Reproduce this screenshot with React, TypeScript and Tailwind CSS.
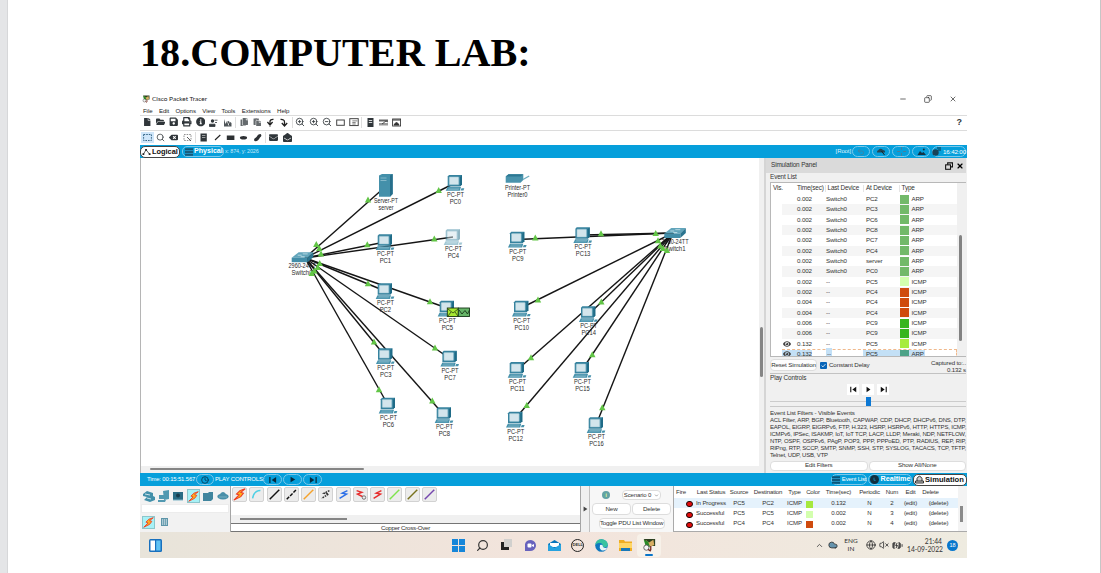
import type { ReactNode } from "react";
import { FaFile, FaFolderOpen, FaSave, FaPrint, FaInfoCircle, FaPaste, FaCopy, FaBackspace, FaEnvelope, FaEnvelopeOpen, FaEye } from "react-icons/fa";
import { ZoomIn, ZoomOut, Search, Undo2, Clock, Globe, VolumeX, Cloud, ChevronUp, ChevronDown, BatteryCharging, Minus, X, Copy } from "lucide-react";

const PCS: [string, number, number][] = [
  ["PC0", 455, 175], ["PC1", 385, 234.3], ["PC4", 453, 229.3], ["PC2", 385, 283.3], ["PC9", 517.3, 231.7],
  ["PC5", 447, 300.7], ["PC10", 521.3, 300.7], ["PC14", 588.3, 306.3], ["PC3", 385.3, 348.3], ["PC7", 449.7, 350.7],
  ["PC11", 517, 362], ["PC15", 582, 362], ["PC6", 388, 397.7], ["PC8", 444, 407.3], ["PC12", 515.3, 411.7],
  ["PC16", 596, 417.3], ["PC13", 582.7, 227.3],
];
const LEFT_ENDS = [[385, 187], [455, 183], [385, 242], [453, 237], [385, 291], [447, 308], [385, 356], [449, 358], [388, 405], [444, 415]];
const RIGHT_ENDS = [[517, 239.5], [583, 235], [521, 308], [588, 315], [517, 370], [582, 370], [515, 419], [596, 425]];
const LINKS = [
  [316.3, 244.3], [319.3, 248.5], [321, 254], [319.7, 263.3], [317.7, 267.3], [314.3, 271], [311.7, 273.3],
  [368, 200], [438.7, 190.3], [367.3, 244.7], [434.3, 239], [368, 283.7], [430, 301.7], [374, 342], [435, 348],
  [379, 389.7], [432.3, 401], [538, 300], [601.3, 302], [531, 357.7], [592.3, 354.7], [526.7, 405.3], [602.3, 407.7],
  [535.3, 238], [601, 233.7], [655.7, 233.3], [658, 240.7], [660.3, 246], [663, 248.3], [667, 250.3],
];

function Label({ x, y, w, children }: { x: number; y: number; w: number; children: string }) {
  return <text x={x} y={y + 2.5} textAnchor="middle" textLength={w} lengthAdjust="spacingAndGlyphs" fontSize="6.8" fill="#2a2a2a">{children}</text>;
}

function Pc({ x, y, faded }: { x: number; y: number; faded: boolean }) {
  return (
    <g transform={`translate(${x} ${y})`} opacity={faded ? 0.5 : 1}>
      <path d="M-6 0 H7 V9.5 L5 11.5 H-7.3 V1.5Z" fill="#36829e" />
      <path d="M5 2 L7 0 V9.5 L5 11.5Z" fill="#1f6b87" />
      <rect x="-5.8" y="1.9" width="9.6" height="7.8" rx=".6" fill="#d3e5ec" stroke="#8cbccd" strokeWidth=".5" />
      <path d="M-7.5 12 H6 L4.8 15.7 H-9.3Z" fill="#4691ab" />
      <path d="M-6.5 13.2H4.3M-7.2 14.5H3.8" stroke="#9cc7d5" strokeWidth=".5" />
      <path d="M6.5 13.3h2.8l-.8 2.2H5.5z" fill="#4691ab" />
    </g>
  );
}

function Switch({ x, y }: { x: number; y: number }) {
  return (
    <g transform={`translate(${x} ${y})`}>
      <path d="M0 6 L7 .5 H21.5 L16 6Z" fill="#62a5bb" />
      <path d="M0 6H16V10.5H0Z" fill="#428da8" />
      <path d="M16 6 L21.5.5V5.5L16 10.5Z" fill="#2b7590" />
      <path d="M6 3.5h4M11 2.2h5M9 5h4" stroke="#d8edf3" strokeWidth=".7" />
    </g>
  );
}

function Topology() {
  return (
    <svg viewBox="141 158 618 308" className="block h-[308px] w-[618px] font-['Liberation_Sans',sans-serif]">
      <Label x={302} y={265.7} w={27}>2960-24TT</Label>
      <Label x={302} y={272.5} w={21}>Switch0</Label>
      <Label x={675} y={241.7} w={27}>2960-24TT</Label>
      <Label x={675} y={248.5} w={21}>Switch1</Label>
      <g stroke="#151515" strokeWidth="1.4">
        {LEFT_ENDS.map(([x, y]) => <line key={`${x}-${y}`} x1="305" y1="258" x2={x} y2={y} />)}
        {RIGHT_ENDS.map(([x, y]) => <line key={`${x}-${y}`} x1="673" y1="233" x2={x} y2={y} />)}
      </g>
      <Switch x={291.7} y={251.7} />
      <Switch x={664.3} y={227.5} />
      <path d="M379 175.5L382 174H392.7V194L390 196.7H379Z" fill="#4490aa" />
      <path d="M390 175.5L392.7 174V194L390 196.7Z" fill="#276f8b" />
      <path d="M380.5 178h6M380.5 180.5h6" stroke="#a2cbd8" strokeWidth=".7" />
      <Label x={386} y={200.7} w={24}>Server-PT</Label>
      <Label x={386} y={207.3} w={15}>server</Label>
      <path d="M505.7 176.5L508.5 174.3H523.3V180L520.5 182.7H505.7Z" fill="#4993ac" />
      <path d="M505.7 176.5L508.5 174.3H523.3L520.5 176.5Z" fill="#2d7893" />
      <path d="M523 179.5L529.2 176" stroke="#70adbf" strokeWidth="1.4" />
      <Label x={517.5} y={187.6} w={25}>Printer-PT</Label>
      <Label x={517.5} y={194.4} w={20}>Printer0</Label>
      {PCS.map(([n, x, y]) => (
        <g key={n}>
          <Pc x={x} y={y} faded={n === "PC4"} />
          <Label x={x + 0.4} y={y + 19.5} w={17}>PC-PT</Label>
          <Label x={x + 0.4} y={y + 26.5} w={n.length > 3 ? 14.5 : 11.5}>{n}</Label>
        </g>
      ))}
      {LINKS.map(([x, y]) => <path key={`${x}-${y}`} d={`M${x} ${y - 3.4}L${x + 3.2} ${y + 2.6}H${x - 3.2}Z`} fill="#62c546" />)}
      <rect x="447.3" y="308" width="11" height="8.5" fill="#a6e832" stroke="#1b3410" strokeWidth=".9" />
      <path d="M448 309l5 4 5-4M448 316l3-4M458 316l-3-4" fill="none" stroke="#28400f" strokeWidth=".8" />
      <rect x="458.3" y="308" width="11.2" height="8.5" fill="#66b568" stroke="#173719" strokeWidth=".9" />
      <path d="M459 310l3 4 3-3.500 2.500 3.500 2-4" fill="none" stroke="#173719" strokeWidth=".9" />
    </svg>
  );
}

function Cell({ children, active }: { children: ReactNode; active?: boolean }) {
  return <div className={active ? "flex h-[11px] w-[13.3px] shrink-0 items-center justify-center bg-[#cfe6fa]" : "flex h-[11px] w-[13.3px] shrink-0 items-center justify-center"}>{children}</div>;
}
function Sep() {
  return <div className="flex h-[11px] w-[3.4px] shrink-0 justify-center"><div className="w-px bg-[#dedede]" /></div>;
}
function Draw({ children, w = 9, h = 9, vb = "0 0 9 9" }: { children: ReactNode; w?: number; h?: number; vb?: string }) {
  return <svg width={w} height={h} viewBox={vb} fill="none" className="block shrink-0">{children}</svg>;
}

function Toolbars() {
  return (
    <>
      <div className="flex h-[15px] shrink-0 items-center border-t border-[#dcdcdc] pb-[2px] pl-[0.7px] text-[#30363a]">
        <Cell><FaFile size={8.5} /></Cell><Cell><FaFolderOpen size={9.5} /></Cell><Cell><FaSave size={9.5} /></Cell><Cell><FaPrint size={9.5} /></Cell><Cell><FaInfoCircle size={9.5} /></Cell>
        <Cell><Draw><circle cx="3.5" cy="3" r="1.7" fill="#30363a" /><path d="M.5 8.5V6.2h5.5v2.3zM5.5 2.2h3M6 4.5h2" fill="#30363a" stroke="#30363a" strokeWidth=".8" /></Draw></Cell>
        <Cell><Draw><path d="M1 1v7.5h7.5V5L6.5 3.5v4h-1L4 3 2.5 6z" fill="#50565a" /><path d="M5 3l2 4.5" stroke="#30363a" /></Draw></Cell>
        <Sep />
        <Cell><FaCopy size={8.5} className="text-[#656a6d]" /></Cell><Cell><FaPaste size={8.5} className="text-[#656a6d]" /></Cell>
        <Cell><Draw><path d="M4 8.500V3.5Q4 1.2 7.500 1.400M1.400 4l2.6 3L6.6 4" stroke="#222" strokeWidth="1.3" /></Draw></Cell>
        <Cell><Draw><path d="M1.500 1.400Q5.5 1.2 5.5 4v4M2.800 5L5.5 8l2.7-3" stroke="#222" strokeWidth="1.3" /></Draw></Cell>
        <Sep />
        <Cell><ZoomIn size={10} /></Cell><Cell><ZoomIn size={10} /></Cell><Cell><ZoomOut size={10} /></Cell>
        <Cell><Draw><rect x=".7" y="2" width="7.6" height="5.3" stroke="#444" /></Draw></Cell>
        <Cell><Draw w={10} h={10}><rect x=".7" y="1.5" width="7.6" height="6.2" stroke="#444" strokeWidth=".9" /><path d="M3 3.5h4.5M3 5h3M3 6.3h3" stroke="#444" strokeWidth=".6" /></Draw></Cell>
        <Sep />
        <Cell><Draw><rect x="1.5" y="0" width="6" height="9" fill="#30363a" /><path d="M2.8 2.5h3.4M2.8 4.5h3.4" stroke="#fff" strokeWidth=".8" /></Draw></Cell>
        <Cell><Draw><path d="M0 1.500h9v2H0z" fill="#666" /><path d="M0 5h9v2.5H0z" fill="#999" /><path d="M3 6l4-3 2 1" stroke="#333" strokeWidth=".8" /></Draw></Cell>
        <Cell><Draw><rect x=".6" y="1" width="8" height="7" stroke="#333" strokeWidth=".9" /><path d="M1 2h7M2 7q2.5-5 5 0z" stroke="#333" fill="#333" /></Draw></Cell>
        <span className="mr-[5px] ml-auto text-[9px] leading-none font-bold">?</span>
      </div>
      <div className="flex h-[15px] shrink-0 items-center border-t border-[#dcdcdc] pb-[2px] pl-[0.7px] text-[#30363a]">
        <Cell active><Draw><rect x=".6" y="1.5" width="7.8" height="6" stroke="#386889" strokeDasharray="1.6 1" /></Draw></Cell>
        <Cell><Search size={9} /></Cell><Cell><FaBackspace size={9} /></Cell>
        <Cell><Draw><rect x="1" y="1.5" width="7" height="6" stroke="#777" strokeWidth=".8" strokeDasharray="1.6 1" /><path d="M4 4l4 4" stroke="#555" /></Draw></Cell>
        <Sep />
        <Cell><Draw><rect x="1.5" y=".5" width="6.3" height="8" fill="#30363a" /><path d="M3 2.5h3.4M3 4.5h3.4" stroke="#ccc" strokeWidth=".7" /></Draw></Cell>
        <Cell><Draw><path d="M2 7L7.3 2" stroke="#222" strokeWidth="1.1" /></Draw></Cell>
        <Cell><Draw><rect x=".8" y="2.5" width="7.6" height="4.5" fill="#2d3033" /></Draw></Cell>
        <Cell><Draw><ellipse cx="4.5" cy="4.7" rx="3.6" ry="1.8" fill="#2d3033" /></Draw></Cell>
        <Cell><Draw><path d="M1.5 8Q0 6 3.5 4 5 .7 7.5 1 9.5 2.5 7 4.5 5 8.8 1.5 8Z" fill="#2d3033" /></Draw></Cell>
        <Sep />
        <Cell><FaEnvelope size={9} /></Cell><Cell><FaEnvelopeOpen size={9} /></Cell>
      </div>
    </>
  );
}

function Pill({ children, className = "w-[18px]" }: { children: ReactNode; className?: string }) {
  return <div className={"flex h-[11px] shrink-0 items-center justify-center rounded-full border border-[#7cc8ea] " + className}>{children}</div>;
}
const Bars = ({ c }: { c: string }) => <Draw w={8} h={8}><path d="M0 1.3h9M0 4.5h9M0 7.7h9" stroke={c} strokeWidth="2.2" /><path d="M0 3h9M0 6h9" stroke="#3c8fb8" strokeWidth=".7" /></Draw>;

function TopBar() {
  return (
    <div className="flex h-[13px] shrink-0 items-center bg-[#069fdb] text-white">
      <div className="flex h-[12px] w-[40px] shrink-0 items-center rounded-[5px] border border-[#444] bg-white pl-px text-[7.4px] font-bold text-[#111]">
        <Draw w={9} h={8}><path d="M1 7L4 2l4 5" stroke="#222" strokeWidth=".8" /><path d="M0 6h2v2H0zM3 1h2v2H3zM7 6h2v2H7z" fill="#222" /></Draw><span className="ml-px">Logical</span>
      </div>
      <div className="ml-[2px] flex h-[11px] w-[42px] shrink-0 items-center rounded-[5px] border border-[#7cc8ea] pl-[2px] text-[7.1px] font-bold"><Bars c="#175978" /><span className="ml-px">Physical</span></div>
      <span className="ml-px text-[5.4px] tracking-[-0.12px] whitespace-nowrap text-[#c7eafa]">x: 874, y: 2026</span>
      <div className="mr-px ml-auto flex items-center gap-[2px]">
        <span className="mr-[-1px] text-[6px] tracking-[-0.1px] text-[#dff4fd]">[Root]</span>
        <Pill><Undo2 size={8} className="text-[#56798e]" /></Pill>
        <Pill><Draw w={10} h={9}><path d="M.5 5.5Q0 3.5 2 3 4 .3 6.5 3 9 3 8.5 5.5z" fill="#244858" /><path d="M5 4l3 4" stroke="#222" /></Draw></Pill>
        <Pill><Draw w={9} h={9}><path d="M4.5 0v3M4.5 6v3M0 4.5h3M6 4.5h3" stroke="#48809d" /></Draw></Pill>
        <Pill><Draw w={9} h={9}><path d="M.5 8L3 4l2 2 1.5-1L9 8z" fill="#123447" /><circle cx="6.8" cy="2.5" r="1" fill="#123447" /></Draw></Pill>
        <Pill className="w-[34px]"><Draw w={9} h={9}><circle cx="3.5" cy="5.5" r="3.2" fill="#174359" /><path d="M5 1h4M6 3h3" stroke="#123447" /></Draw><span className="ml-[2px] text-[6.2px] tracking-[-0.15px]">16:42:00</span></Pill>
      </div>
    </div>
  );
}

const G = "bg-[#72b969]";
const EVENTS: [string, string, string, string, string][] = [
  ["0.002", "Switch0", "PC2", G, "ARP"], ["0.002", "Switch0", "PC3", G, "ARP"], ["0.002", "Switch0", "PC6", G, "ARP"], ["0.002", "Switch0", "PC8", G, "ARP"],
  ["0.002", "Switch0", "PC7", G, "ARP"], ["0.002", "Switch0", "PC4", G, "ARP"], ["0.002", "Switch0", "server", G, "ARP"], ["0.002", "Switch0", "PC0", G, "ARP"],
  ["0.002", "--", "PC5", "bg-[#d3ffae]", "ICMP"], ["0.002", "--", "PC4", "bg-[#cf4b0e]", "ICMP"], ["0.004", "--", "PC4", "bg-[#cf4b0e]", "ICMP"], ["0.004", "--", "PC4", "bg-[#cf4b0e]", "ICMP"],
  ["0.006", "--", "PC9", "bg-[#37b51e]", "ICMP"], ["0.006", "--", "PC9", "bg-[#37b51e]", "ICMP"], ["0.132", "--", "PC5", "bg-[#a7ec3f]", "ICMP"], ["0.132", "--", "PC5", "bg-[#4da287]", "ARP"],
];

function EventTable() {
  return (
    <div className="flex h-[175px] shrink-0 overflow-hidden border-y border-l border-[#b8b8b8] bg-white">
      <div className="w-[186px] shrink-0">
        <div className="flex h-[11px] items-center text-[6.4px] tracking-[-0.17px] whitespace-nowrap">
          <span className="w-[25px] pl-[2px]">Vis.</span><span className="w-[30px] border-r border-[#e5e5e5] pl-px">Time(sec)</span><span className="w-[38px] border-r border-[#e5e5e5] pl-[1.5px]">Last Device</span><span className="w-[36px] border-r border-[#e5e5e5] pl-[2px]">At Device</span><span className="pl-[1.5px]">Type</span>
        </div>
        {EVENTS.map(([t, l, a, c, k], i) => {
          const hl = i === 15;
          return (
            <div key={i} className={"ml-[11px] flex h-[10.33px] items-center text-[6.2px] tracking-[-0.12px] whitespace-nowrap " + (hl ? "border border-dashed border-[#f0b98c]" : i % 2 ? "bg-[#f5f5f5]" : "")}>
              <span className={"flex h-full w-[12px] items-center pl-px " + (hl ? "-ml-px bg-[#c3e0f6]" : "")}>{i > 13 && <FaEye size={8} className="text-[#444]" />}</span>
              <span className={"mr-[13px] flex h-full w-[18px] items-center pl-[3px] " + (hl ? "bg-[#c3e0f6]" : "")}>{t}</span>
              <span className="w-[38px] pl-px"><span className={hl ? "bg-[#c3e0f6] px-px py-[2px]" : ""}>{l}</span></span>
              <span className={"flex h-full w-[37px] items-center pl-[3px] " + (hl ? "bg-[#c3e0f6]" : "")}>{a}</span>
              <span className={"h-[9px] w-[9px] shrink-0 " + c} />
              <span className={"flex h-full items-center pr-px pl-[2.5px] " + (hl ? "bg-[#c3e0f6]" : "")}>{k}</span>
            </div>
          );
        })}
      </div>
      <div className="flex-1 bg-[#f0f0f0] pt-[52px] pl-[2px]"><div className="h-[106px] w-[2.5px] rounded bg-[#828282]" /></div>
    </div>
  );
}

const FILTERS = [
  "ACL Filter, ARP, BGP, Bluetooth, CAPWAP, CDP, DHCP, DHCPv6, DNS, DTP,",
  "EAPOL, EIGRP, EIGRPv6, FTP, H.323, HSRP, HSRPv6, HTTP, HTTPS, ICMP,",
  "ICMPv6, IPSec, ISAKMP, IoT, IoT TCP, LACP, LLDP, Meraki, NDP, NETFLOW,",
  "NTP, OSPF, OSPFv6, PAgP, POP3, PPP, PPPoED, PTP, RADIUS, REP, RIP,",
  "RIPng, RTP, SCCP, SMTP, SNMP, SSH, STP, SYSLOG, TACACS, TCP, TFTP,",
];

function SimulationPanel() {
  return (
    <div className="flex h-full w-[203px] shrink-0 flex-col border-l-2 border-[#d5d5d5] bg-[#f0f0f0] pr-px pl-[4px] text-[6.4px] leading-none tracking-[-0.13px] text-[#333]">
      <div className="-ml-[4px] flex h-[15px] shrink-0 items-center bg-[#dadada] pr-[2px] pl-[5px]">
        Simulation Panel
        <div className="ml-auto flex gap-[3px] text-black"><Draw w={8} h={8}><path d="M3 3V1h5.5v4.5H6.5" stroke="#111" strokeWidth="1.2" /><rect x=".7" y="3.2" width="5.5" height="5" stroke="#111" strokeWidth="1.2" /></Draw><X size={8} strokeWidth={3.5} /></div>
      </div>
      <div className="flex h-[9px] shrink-0 items-center">Event List</div>
      <EventTable />
      <div className="flex h-[17px] shrink-0 items-center border-b border-[#c2c2c2]">
        <div className="flex h-[12px] w-[47px] items-center justify-center rounded-sm border border-[#ddd] bg-[#fdfdfd] text-[6.2px] tracking-[-0.14px] whitespace-nowrap">Reset Simulation</div>
        <div className="ml-[3px] flex h-[7px] w-[7px] items-center justify-center rounded-[1px] bg-[#0865b8]"><Draw w={5} h={5}><path d="M1 4.5l2.5 2.5L8 2" stroke="#fff" strokeWidth="1.4" /></Draw></div>
        <span className="ml-[2px] text-[6.2px]">Constant Delay</span>
        <div className="ml-auto pt-px text-right text-[6.1px] leading-[7px]">Captured to:..<br />0.132 s</div>
      </div>
      <div className="flex h-[33px] shrink-0 flex-col border-b border-[#c9c9c9]">
        <div className="flex h-[9px] items-center">Play Controls</div>
        <div className="flex h-[13px] items-center justify-center gap-[3px]">
          <div className="flex h-[11px] w-[12px] items-center justify-center bg-white"><Draw w={7} h={7}><path d="M1 1v7" stroke="#111" strokeWidth="1.4" /><path d="M8 1v7L3 4.5z" fill="#111" /></Draw></div>
          <div className="flex h-[11px] w-[12px] items-center justify-center bg-white"><Draw w={7} h={7}><path d="M2 1v7l5-3.5z" fill="#111" /></Draw></div>
          <div className="flex h-[11px] w-[12px] items-center justify-center bg-white"><Draw w={7} h={7}><path d="M8 1v7" stroke="#111" strokeWidth="1.4" /><path d="M1 1v7l5-3.5z" fill="#111" /></Draw></div>
        </div>
        <div className="flex h-[10px] items-center"><div className="h-px flex-1 bg-[#ccc]" /><div className="h-[9px] w-[5px] bg-[#0c78d4]" /><div className="h-px flex-1 bg-[#ccc]" /></div>
      </div>
      <div className="mt-[2px] text-[6.2px] leading-[8px] tracking-[-0.15px]">Event List Filters - Visible Events</div>
      <div className="text-[6px] leading-[7px] tracking-[-0.19px]">
        {FILTERS.map((f) => <div key={f} className="[text-align-last:justify] whitespace-nowrap">{f}</div>)}
        <div>Telnet, UDP, USB, VTP</div>
      </div>
      <div className="mt-[1.5px] flex shrink-0 gap-px text-[6.2px]">
        <div className="flex h-[10px] flex-1 items-center justify-center rounded-sm border border-[#ddd] bg-white">Edit Filters</div>
        <div className="flex h-[10px] flex-1 items-center justify-center rounded-sm border border-[#ddd] bg-white">Show All/None</div>
      </div>
    </div>
  );
}

function StatusBar() {
  return (
    <div className="flex h-[13px] shrink-0 items-center bg-[#069fdb] pl-[7px] text-[6px] whitespace-nowrap text-white">
      <span className="w-[49px] text-[5.9px] tracking-[-0.13px]">Time: 00:15:51.567</span>
      <Pill><Clock size={8} className="text-[#08364d]" strokeWidth={2.5} /></Pill>
      <span className="ml-px w-[48px] tracking-[-0.15px]">PLAY CONTROLS:</span>
      <div className="flex gap-[1px]">
        <Pill className="w-[19px]"><Draw w={8} h={8}><path d="M1 1v7" stroke="#062b3e" strokeWidth="1.4" /><path d="M8 1v7L3 4.5z" fill="#062b3e" /></Draw></Pill>
        <Pill className="w-[19px]"><Draw w={7} h={7}><path d="M2 1v7l6-3.5z" fill="#062b3e" /></Draw></Pill>
        <Pill className="w-[19px]"><Draw w={8} h={8}><path d="M8 1v7" stroke="#062b3e" strokeWidth="1.4" /><path d="M1 1v7l5-3.5z" fill="#062b3e" /></Draw></Pill>
      </div>
      <Pill className="ml-auto w-[36px]"><Bars c="#0b5478" /><span className="ml-[2px] text-[6px] tracking-[-0.2px]">Event List</span></Pill>
      <Pill className="ml-px w-[44px]"><span className="flex h-[9px] w-[9px] shrink-0 items-center justify-center rounded-full bg-[#122f3e]"><Draw w={6} h={6}><path d="M4.5 1v4H7" stroke="#16a1d8" /></Draw></span><span className="ml-[2px] text-[7.2px] font-bold">Realtime</span></Pill>
      <div className="ml-px flex h-[12px] w-[54px] items-center rounded-[5px] border border-[#444] bg-white pl-px text-[7.6px] font-bold text-[#111]">
        <Draw w={9} h={9}><path d="M2 6V3.5Q4.5-1 7 3.5V6M.5 6H8.5V8H.5z" stroke="#222" fill="#ccc" strokeWidth=".9" /></Draw><span className="ml-px">Simulation</span>
      </div>
    </div>
  );
}

const ZIG = "M12 3L6 6l5 1-8 5";
const CABLES: [string, string, string | undefined][] = [
  ["M3 12C4 6 7 3 12 3", "#4fd0e4", undefined], ["M2 13L13 2", "#111", undefined], ["M2 13L13 2", "#111", "4 1.5"], ["M2 13L13 2", "#f5a22b", undefined],
  [ZIG, "#333", "2 1"], [ZIG, "#2b6fe8", undefined], ["M3 3l6 2-5 2 8 4", "#e62c2c", undefined], [ZIG, "#e62c2c", undefined],
  ["M2 13L13 2", "#7ee34d", undefined], ["M2 13L13 2", "#78721e", undefined], ["M2 13L13 2", "#7546ae", undefined],
];
const Bolt = ({ s = 13 }: { s?: number }) => <Draw w={s} h={s} vb="0 0 15 15"><path d="M14 1L8 3 4 7l3 1-6 6 8-4 3-4-3-1z" fill="#ffb21c" stroke="#ee3a25" strokeWidth="1.2" /></Draw>;
const CableTile = ({ children }: { children: ReactNode }) => <div className="flex h-[15px] w-[15px] shrink-0 items-center justify-center rounded-[2px] border border-[#d2d2d2] bg-[#ececec]">{children}</div>;

function Devices() {
  return (
    <div className="flex h-[46px] w-[90px] shrink-0 flex-col bg-[#f2f2f2]">
      <div className="flex h-[18px] items-center gap-[2.6px] pt-[2px] pl-[3px]">
        <Draw w={12} h={12} vb="0 0 12 12"><path d="M0 4l4-3 6 2v3l2 1v3l-5 2-6-2 3-3-4-1z" fill="#4290aa" /><path d="M2 4l5 1M4 8l4 1" stroke="#c9e2ea" /></Draw>
        <Draw w={12} h={12} vb="0 0 12 12"><path d="M5 1l6-1v9l-5 1zM1 5h5v4H1zM0 10h8l-1 2H0z" fill="#5299b1" /></Draw>
        <Draw w={12} h={12} vb="0 0 12 12"><path d="M1 2h10v8H1z" fill="#2a6c84" /><circle cx="6" cy="5.5" r="2" fill="#173c4c" /><path d="M1 10h10" stroke="#7cb3c6" /></Draw>
        <div className="flex h-[14px] w-[13px] shrink-0 items-center justify-center border border-[#8bc6cc] bg-[#a7f1f6]"><Bolt s={11} /></div>
        <Draw w={12} h={12} vb="0 0 12 12"><path d="M1 3h5l1-1h4v7l-2 2H1z" fill="#40859e" /></Draw>
        <Draw w={12} h={12} vb="0 0 12 12"><path d="M1 8Q-1 5 3 4 6 0 9 4q4 1 2 4-5 3-10 0z" fill="#498fa9" /><path d="M2 7h8" stroke="#8dbdcb" strokeWidth=".7" /></Draw>
      </div>
      <div className="mx-px h-[9px] border border-[#ececec] bg-white" />
      <div className="flex h-[18px] items-center gap-[6px] pl-[2px]">
        <div className="flex h-[13px] w-[13px] items-center justify-center border border-[#8bc6cc] bg-[#a7f1f6]"><Bolt s={11} /></div>
        <Draw w={7} h={8} vb="0 0 7 8"><path d="M0 0h7v8H0z" fill="#5d95a9" /><path d="M1 2h5M1 4h5M1 6h5" stroke="#fff" strokeDasharray="1.2 .7" /></Draw>
      </div>
    </div>
  );
}

const PDUS: [string, string, string, string, string, string][] = [
  ["In Progress", "PC5", "PC2", "bg-[#a6e83e]", "0.132", "2"],
  ["Successful", "PC5", "PC5", "bg-[#d3ffae]", "0.002", "3"],
  ["Successful", "PC4", "PC4", "bg-[#cf4b0e]", "0.002", "4"],
];
const COLS = "grid grid-cols-[20px_34px_22px_36px_17px_17px_37px_25px_20px_17px_39px] items-center justify-items-center";

function BottomPanel() {
  return (
    <div className="flex h-[46px] shrink-0 bg-[#f0f0f0] text-[6.2px] leading-none tracking-[-0.12px] text-[#333]">
      <Devices />
      <div className="flex w-[351px] shrink-0 flex-col border-x border-[#a5a5a5]">
        <div className="flex h-[29px] gap-[2.25px] bg-white pt-[0.5px] pl-px">
          <CableTile><Bolt /></CableTile>
          {CABLES.map(([d, c, dash], i) => <CableTile key={i}><Draw w={13} h={13} vb="0 0 15 15"><path d={d} stroke={c} strokeWidth="1.7" strokeDasharray={dash} />{i === 6 && <circle cx="11.5" cy="11" r="2" stroke="#666" fill="#eee" />}</Draw></CableTile>)}
        </div>
        <div className="flex h-[8px] items-center bg-[#f0f0f0] pl-[9px]"><div className="h-[2px] w-[107px] bg-[#858585]" /></div>
        <div className="flex h-[9px] items-center justify-center border-y border-[#757575] bg-white pt-px text-[6.2px] tracking-[-0.27px]">Copper Cross-Over</div>
      </div>
      <div className="flex w-[9px] shrink-0 items-center justify-center border-r border-[#c0c0c0]"><Draw w={5} h={6}><path d="M1 0v9l7-4.5z" fill="#444" /></Draw></div>
      <div className="flex w-[83px] shrink-0 flex-col items-center bg-[#f7f7f7] pt-[3px]">
        <div className="flex h-[12px] w-full items-center pl-[12px]"><span className="flex h-[8px] w-[8px] items-center justify-center rounded-full bg-[#62a3a5] text-[6px] font-bold text-[#ddf590]">i</span><span className="ml-[12px] flex h-[10px] w-[39px] items-center justify-center gap-[3px] rounded-sm border border-[#ddd] bg-white text-[6px] whitespace-nowrap">Scenario 0 <ChevronDown size={5} /></span></div>
        <div className="mt-[2px] flex gap-px"><span className="flex h-[12px] w-[39px] items-center justify-center rounded-sm border border-[#ddd] bg-white">New</span><span className="flex h-[12px] w-[39px] items-center justify-center rounded-sm border border-[#ddd] bg-white">Delete</span></div>
        <span className="mt-[3px] flex h-[11px] w-[66px] items-center justify-center rounded-sm border border-[#ddd] bg-white tracking-[-0.22px] whitespace-nowrap">Toggle PDU List Window</span>
      </div>
      <div className="flex flex-1 border-b border-l border-[#aaa] bg-white whitespace-nowrap">
        <div className="w-[284px] shrink-0">
          <div className={COLS + " h-[11.5px] pt-px text-[6.1px] tracking-[-0.17px]"}><span className="mr-[6px]">Fire</span><span>Last Status</span><span>Source</span><span>Destination</span><span>Type</span><span className="mr-[-3px]">Color</span><span>Time(sec)</span><span>Periodic</span><span>Num</span><span>Edit</span><span className="mr-[16px]">Delete</span></div>
          {PDUS.map(([s, a, b, c, t, n], i) => (
            <div key={n} className={COLS + " h-[10.4px] text-[6.1px] " + (i ? "" : "bg-[#e5f2fc]")}>
              <span className="mt-[3px] mr-[-11px] h-[6px] w-[7px] rounded-full border-[1.5px] border-[#1e0505] bg-[#e20b0b]" /><span className="justify-self-start pl-[2px]">{s}</span><span>{a}</span><span>{b}</span><span>ICMP</span><span className={"mt-[3px] ml-[-4px] h-[7px] w-[7px] " + c} /><span>{t}</span><span>N</span><span>{n}</span><span>(edit)</span><span>(delete)</span>
            </div>
          ))}
        </div>
        <div className="flex-1 bg-[#f3f3f3] pt-[20px] pl-[2px]"><div className="h-[16px] w-[3px] bg-[#8a8a8a]" /></div>
      </div>
    </div>
  );
}

function Packet({ s }: { s: number }) {
  return <Draw w={s} h={s} vb="0 0 16 16"><path d="M2 1h13v8H7z" fill="#2c4020" /><path d="M4 2l4 3 5-3 1 6-5 2z" fill="#d9ae63" /><path d="M2 2l5 2 2 6-4 2z" fill="#2a8b27" /><circle cx="5" cy="11" r="3" fill="#f5f5f5" stroke="#555" /><path d="M7 13l3 2M10 9v5" stroke="#772b21" strokeWidth="1.5" /></Draw>;
}

function Taskbar() {
  return (
    <div className="flex h-[26px] shrink-0 items-center bg-gradient-to-r from-[#e8e4da] via-[#f3e4dc] to-[#eeebe0] pl-[9px] text-[6.3px] leading-[8px] text-[#333]">
      <Draw w={13} h={13} vb="0 0 13 13"><rect width="13" height="13" rx="1.5" fill="#1870be" /><rect x="1.5" y="1.5" width="4.5" height="10" fill="#fff" /><rect x="7.2" y="1.5" width="4.3" height="10" fill="#5fc2f4" /></Draw>
      <div className="ml-[285px] flex w-[214px] shrink-0 [&>div]:flex [&>div]:h-[23px] [&>div]:w-[23.8px] [&>div]:items-center [&>div]:justify-center">
        <div><Draw w={13} h={13} vb="0 0 13 13"><path d="M0 0h6v6H0zM7 0h6v6H7zM0 7h6v6H0zM7 7h6v6H7z" fill="#1686d9" /></Draw></div>
        <div><Search size={13} strokeWidth={2.2} className="-scale-x-100" /></div>
        <div><Draw w={12} h={12} vb="0 0 12 12"><rect x="4" width="8" height="8" fill="#d1d0ce" /><path d="M1 3h3v5h5v3H1z" fill="#222" /></Draw></div>
        <div><Draw w={13} h={13} vb="0 0 13 13"><path d="M1 12V5Q2 1 7 1q5 1 5 6-1 5-6 5z" fill="#6762bd" /><rect x="3.5" y="4.5" width="4" height="4" rx="1" fill="#fff" /><path d="M8 6l2-1v3L8 7z" fill="#fff" /></Draw></div>
        <div><Draw w={13} h={13} vb="0 0 13 13"><path d="M0 5l6.500-4L13 5v7H0z" fill="#0875ba" /><path d="M2 4h9v4H2z" fill="#fff" /><path d="M0 5l6.500 4L13 5v7H0z" fill="#27a2df" /></Draw></div>
        <div><span className="flex h-[13px] w-[13px] shrink-0 items-center justify-center rounded-full border-[1.5px] border-[#222] text-[4.2px] font-bold tracking-[-0.1px]">DELL</span></div>
        <div><Draw w={13} h={13} vb="0 0 13 13"><circle cx="6.5" cy="6.5" r="6.3" fill="#0e78bf" /><path d="M.3 6Q1 0 7 .3q6 1 5.7 6-1 3-5 1.5Q8 4 5 4 2 3.5.3 6z" fill="#38c3a0" /><path d="M5 6q3-1 3 2 2 1.5 4.5.5Q10 13 6 11 4 9 5 6z" fill="#e9f5f8" /></Draw></div>
        <div><Draw w={13} h={13} vb="0 0 13 13"><path d="M0 1h5l1 1.5h7V12H0z" fill="#efad22" /><path d="M0 4h13v5H0z" fill="#ffd665" /><path d="M2 9h9v3H2z" fill="#1778b9" /></Draw></div>
        <div className="flex-col rounded-sm bg-[#f7f1e9] pt-[3px]"><Packet s={14} /><span className="mt-[2px] h-[2px] w-[8px] shrink-0 rounded bg-[#0874c9]" /></div>
      </div>
      <ChevronUp size={9} className="ml-[154px] shrink-0" />
      <Cloud size={10} fill="#6694ad" className="ml-[4px] shrink-0" />
      <div className="ml-[5px] w-[16px] text-center font-[Lato,sans-serif] text-[6.5px]">ENG<br />IN</div>
      <Globe size={10} className="ml-[7px] shrink-0" /><VolumeX size={10} className="ml-[3px] shrink-0" /><BatteryCharging size={11} fill="#555" className="ml-[3px] shrink-0" />
      <div className="ml-[4px] w-[35px] text-right font-[Lato,sans-serif] text-[6.700px] whitespace-nowrap">21:44<br />14-09-2022</div>
      <span className="ml-[5px] flex h-[11px] w-[11px] shrink-0 items-center justify-center rounded-full bg-[#0877cc] text-[5.5px] text-white">18</span>
    </div>
  );
}

export default function App() {
  return (
    <main className="flex h-[573px] w-[1101px] overflow-hidden bg-white font-['Liberation_Sans',sans-serif]">
      <div className="w-[8px] shrink-0 border-r border-[#d6d7d9] bg-[#e4e5e7]" />
      <div className="flex-1 border-r border-[#c6c6c6] pl-[132px]">
        <h1 className="h-[92px] pt-[30px] font-['Liberation_Serif',serif] text-[40.2px] leading-[46px] font-bold whitespace-nowrap text-black">18.COMPUTER LAB:</h1>
        <section className="flex h-[466px] w-[827px] flex-col">
          <div className="flex h-[13px] shrink-0 items-center pt-px pl-[2px] font-[Lato,sans-serif] text-[6.5px] text-[#222]">
            <Packet s={8} /><span className="ml-[2px]">Cisco Packet Tracer</span>
            <div className="mr-[10px] ml-auto flex gap-[17px]"><Minus size={8} /><Copy size={8} className="-scale-x-100" /><X size={8} /></div>
          </div>
          <div className="flex h-[10px] shrink-0 items-center gap-[6.5px] pt-px pl-[3px] text-[6.1px] tracking-[-0.1px] text-[#222]">
            <span>File</span><span>Edit</span><span>Options</span><span>View</span><span>Tools</span><span>Extensions</span><span>Help</span>
          </div>
          <Toolbars />
          <TopBar />
          <div className="flex h-[315px] shrink-0">
            <div className="w-[619px] shrink-0 border-l border-[#b5b5b5]">
              <Topology />
              <div className="flex h-[7px] items-center bg-[#f0f0f0] pb-px pl-[9px]"><div className="h-[2px] w-[214px] rounded bg-[#858585]" /></div>
            </div>
            <div className="w-[5px] bg-[#f0f0f0] pt-[169px] pl-px"><div className="h-[50px] w-[2.5px] rounded bg-[#858585]" /></div>
            <SimulationPanel />
          </div>
          <StatusBar />
          <BottomPanel />
          <Taskbar />
        </section>
      </div>
    </main>
  );
}
